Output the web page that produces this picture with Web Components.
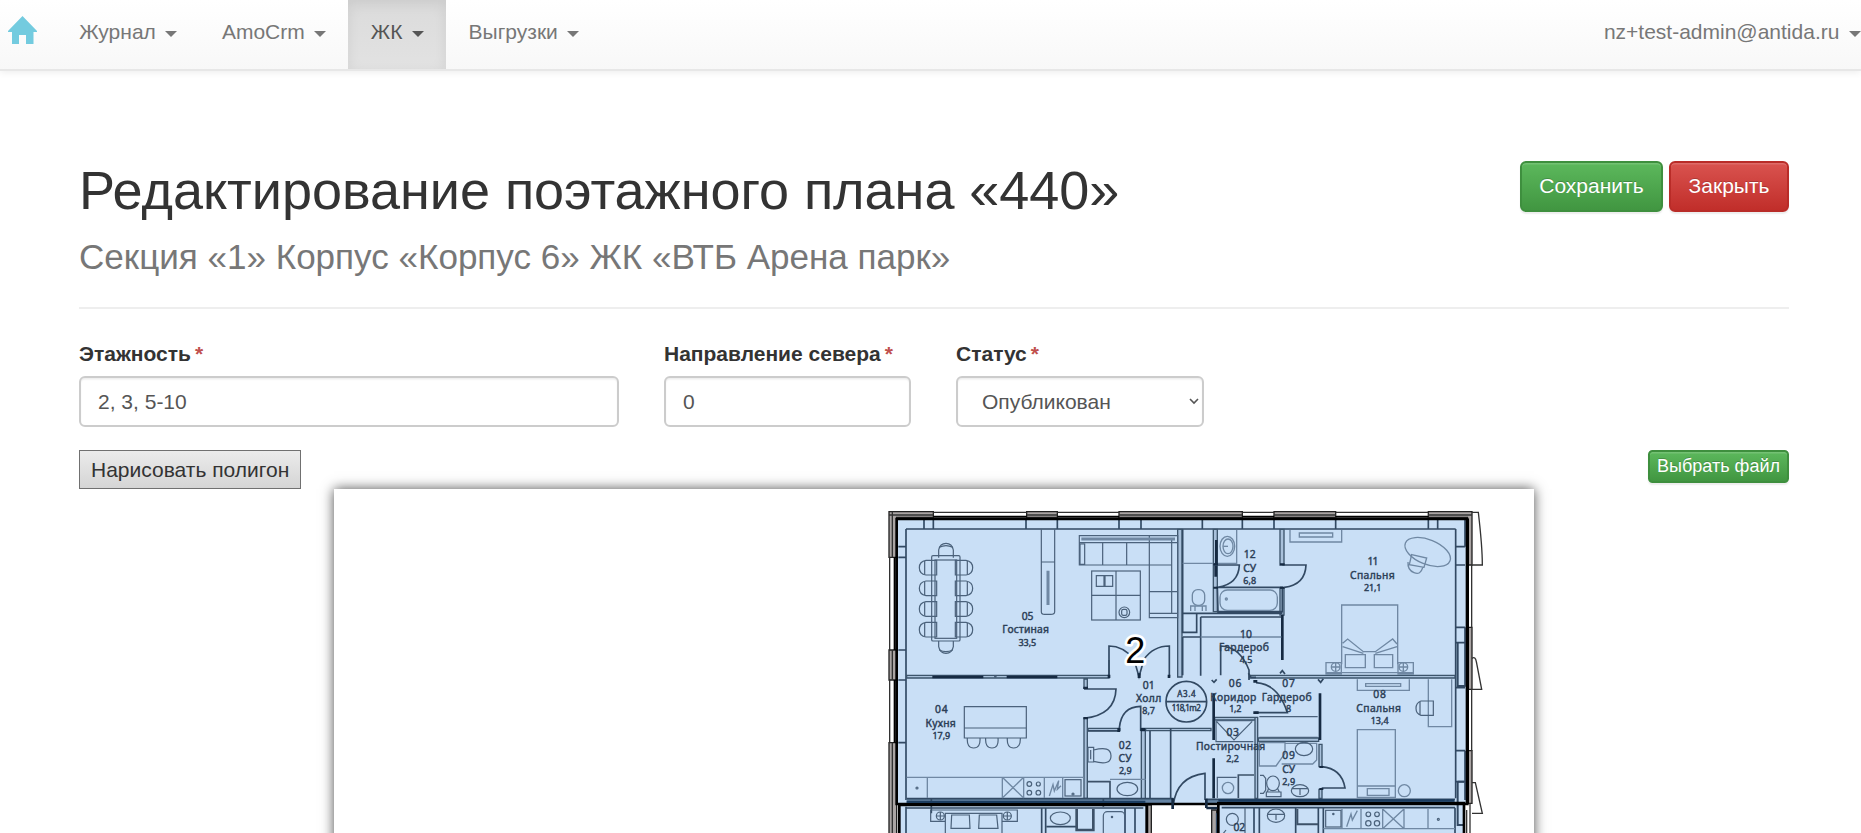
<!DOCTYPE html>
<html lang="ru">
<head>
<meta charset="utf-8">
<title>Редактирование поэтажного плана</title>
<style>
html, body { margin: 0; height: 833px; overflow: hidden; background: #fff; }
body { font: 21px/30px "Liberation Sans", Arial, sans-serif; color: #333; }
</style>
</head>
<body>
<plan-editor-app></plan-editor-app>
<script>
function define(name, html, setup) {
  const t = document.createElement('template');
  t.innerHTML = html;
  customElements.define(name, class extends HTMLElement {
    connectedCallback() {
      if (this.shadowRoot) return;
      this.attachShadow({ mode: 'open' }).appendChild(t.content.cloneNode(true));
      if (setup) setup(this, this.shadowRoot);
    }
  });
}

define('nav-item', `
<style>
:host { display: flex; align-items: flex-start; box-sizing: border-box; height: 69px; padding: 17px 22.5px 0; color: #777; text-shadow: 0 1px 0 rgba(255,255,255,.25); line-height: 30px; white-space: nowrap; }
:host([active]) { color: #555; background: linear-gradient(#dbdbdb, #e2e2e2); box-shadow: inset 0 4px 13px rgba(0,0,0,.075); }
:host([end]) { padding-right: 0.5px; }
i { margin: 14px 0 0 9.1px; border: 6px solid transparent; border-top-color: currentColor; border-bottom: 0; }
</style>
<slot></slot><i></i>`);

define('app-navbar', `
<style>
:host { display: flex; height: 69px; background: linear-gradient(#fff, #f8f8f8); border-bottom: 2px solid #e7e7e7; box-shadow: 0 1.5px 7px rgba(0,0,0,.075); }
.home { width: 48.7px; padding-left: 8px; box-sizing: content-box; }
.home svg { display: block; margin-top: 16px; }
nav { display: flex; flex: 1; }
nav > :last-child { margin-left: auto; }
</style>
<a class="home"><svg width="29" height="28" viewBox="0 0 29 28"><path fill="#73cbdf" d="M14.5 0 29 15v1h-3.500v12H18v-9h-7v9H4V16H0v-1z"/></svg></a>
<nav>
<nav-item>Журнал</nav-item><nav-item>AmoCrm</nav-item><nav-item active>ЖК</nav-item><nav-item>Выгрузки</nav-item>
<nav-item end>nz+test-admin@antida.ru</nav-item>
</nav>`);

define('ui-button', `
<style>
:host { display: block; }
button { display: block; box-sizing: border-box; height: 51px; margin: 0; padding: 0 17.5px 2px; border: 2px solid #3e8f3e; border-radius: 6px; font: 21px/45px "Liberation Sans", Arial, sans-serif; color: #fff; text-shadow: 0 -1px 0 rgba(0,0,0,.2); background: linear-gradient(#5cb85c, #419641); box-shadow: inset 0 1.5px 0 rgba(255,255,255,.15), 0 1.5px 1.500px rgba(0,0,0,.075); white-space: nowrap; }
:host([kind=danger]) button { border-color: #b92c28; background: linear-gradient(#d9534f, #c12e2a); }
:host([kind=small]) button { height: 33px; padding: 0 7px; font-size: 18px; line-height: 27px; border-radius: 4.5px; }
:host([kind=plain]) button { height: 39px; padding: 0 11px; border: 1px solid #707070; border-radius: 0; color: #333; line-height: 36px; background: linear-gradient(#ebebeb, #d5d5d5); box-shadow: none; text-shadow: none; }
</style>
<button><slot></slot></button>`);

define('page-heading', `
<style>
:host { display: flex; justify-content: space-between; align-items: flex-start; height: 146px; border-bottom: 2px solid #eee; }
h1 { margin: 0; font-weight: 400; font-size: 54px; line-height: 59.4px; letter-spacing: -.03px; }
h2 { margin: 16.6px 0 0; font-weight: 400; font-size: 35.05px; line-height: 39.6px; color: #777; }
.actions { display: flex; gap: 6px; }
</style>
<div><h1><slot name="title"></slot></h1><h2><slot name="subtitle"></slot></h2></div>
<div class="actions"><slot></slot></div>`);

define('form-field', `
<style>
:host { display: block; min-width: 0; }
label { display: block; height: 30px; margin-bottom: 7.5px; font-weight: 700; line-height: 30px; white-space: nowrap; }
b { margin-left: 4px; color: #c0504d; }
.box { display: flex; align-items: center; justify-content: space-between; box-sizing: border-box; height: 51px; padding: 0 17px; border: 2px solid #ccc; border-radius: 6px; color: #555; box-shadow: inset 0 1.5px 1.5px rgba(0,0,0,.075); }
svg { display: none; }
:host([select]) .box { padding: 0 3px 0 24px; }
:host([select]) svg { display: block; }
</style>
<label><span></span><b>*</b></label>
<div class="box"><slot></slot><svg width="10" height="7" viewBox="0 0 10 7"><path d="M1 1l4 4 4-4" fill="none" stroke="#555" stroke-width="1.6"/></svg></div>`,
(host, root) => { root.querySelector('span').textContent = host.getAttribute('label'); });

// Drawing units: one third of a pixel, origin at the drawing's upper left.
define('floor-plan', `
<style>
:host { display: block; width: 1200px; height: 360px; margin: 0 auto; background: #fff; box-shadow: 0 0 12px rgba(0,0,0,.7); }
svg { display: block; }
.w { fill: none; stroke: #334a63; stroke-width: 5; }
.t { fill: none; stroke: #3c5168; stroke-width: 8; }
.f { fill: none; stroke: #6f88a3; stroke-width: 4; }
.m { fill: none; stroke: #4b627b; stroke-width: 3.6; }
.d { fill: none; stroke: #152b43; stroke-width: 8; }
.g { fill: #aaa5a4; stroke: #222; stroke-width: 4; }
.o { fill: none; stroke: #333; stroke-width: 4; }
.v { fill: #a9c1db; stroke: #3d546c; stroke-width: 4; }
.k { fill: none; stroke: #000; stroke-width: 8; }
text { font-family: "Noto Sans", sans-serif; fill: #2c4057; stroke: #2c4057; stroke-width: 1.3; font-size: 31px; text-anchor: middle; }
text.s { font-size: 27px; }
text.n { font: 108px "Liberation Sans", Arial, sans-serif; fill: #000; stroke: #fff; stroke-width: 16; paint-order: stroke; stroke-linejoin: round; }
</style>
<svg width="1200" height="344" viewBox="-1638 -33 3600 1032">
<defs><filter id="soft" x="-5%" y="-5%" width="110%" height="110%"><feGaussianBlur stdDeviation="1.5"/></filter></defs>
<g filter="url(#soft)">
  <path fill="#c9dff6" d="M50 57H1762V912H1752V1010H1015V912H800V1010H58V912H50z"/>
  <!-- outer walls -->
  <path class="g" d="M27 35H160V52H50V172H27zM440 35H532V52H440zM717 35H1087V52H717zM1182 35H1367V52H1182zM1645 35H1776V195H1762V52H1645zM27 450H50V540H27zM27 728H50V1010H27zM1764 382H1776V568H1764zM1764 752H1776V910H1764zM803 915H814V1010H803zM995 930H1010V1010H995z"/>
  <path class="o" d="M27 45H160M717 45H1087M1182 45H1367M1645 45H1776M37 35V172M37 450V540M37 728V1010M440 45H532M160 37H440M532 37H717M1087 37H1182M1367 37H1645M29 172V450M29 540V728M1775 195V382M1775 568V752M1760 930V1010M1770 910V1010"/>
  <path class="k" d="M160 50H440M532 50H717M1087 50H1182M1367 50H1645M44 172V450M44 540V728" style="stroke-width:6"/>
  <path class="o" d="M1776 37H1795C1800 80 1807 140 1807 195H1776M1776 475Q1786 468 1789 485L1805 568H1776M1776 848H1786L1807 940H1776"/>
  <!-- perimeter wall inner face -->
  <path class="w" d="M78 87H1727M78 87V900M1727 87V895M132 60V87M160 60V87M438 60V87M532 60V87M717 60V87M783 60V87M967 60V87M1087 60V87M1182 60V87M1367 60V87M1645 60V87M1673 60V87M55 140H78M55 172H78M55 450H78M55 540H78M55 728H78M1727 140H1755M1727 195H1755M1727 382H1755M1727 428H1755M1727 563H1755M1727 752H1755M1727 845H1755M1755 60V140M1755 382V560M1755 752V900"/>
  <path class="w" d="M1733 428V558H1755M1733 845V975H1752M1733 845H1752" style="stroke-width:6"/>
  <path class="v" d="M80 526H687V534H80zM893 88H906V531H893zM1000 88H1012V335H1000zM1200 88H1212V195H1200zM1200 265H1212V345H1200zM687 480V534M1108 526H1725V534H1108zM612 537H622V565H612zM612 655H622V895H612zM624 685H720V692H624zM784 685H796V897H784zM797 685H993V692H797zM1004 652H1125V660H1004zM1125 652H1133V895H1125zM1135 714H1316V724H1135zM1317 733H1326V800H1317zM1317 868H1326V895H1317z"/>
  <path fill="#6584a4" d="M80 897H876V909H80zM980 897H1725V909H980z"/>
  <path class="w" d="M80 896H880M978 898H1725M154 896V940M670 898V920M1010 940V1010"/>
  <!-- living room -->
  <g class="m">
    <rect x="155" y="167" width="85" height="256" rx="4"/><rect x="165" y="180" width="65" height="235"/>
    <path d="M176 173V150Q180 130 198 130T220 150V173M176 423V440Q180 460 198 460T220 440V423"/>
    <path id="ch" d="M170 181H138Q118 184 118 203T138 225H170zM226 181H258Q278 184 278 203T258 225H226z"/>
    <use href="#ch" y="62"/><use href="#ch" y="124"/><use href="#ch" y="186"/>
    <path d="M178 142Q198 132 218 142M178 450Q198 460 218 450M134 183V223M262 183V223M134 245V285M262 245V285M134 307V347M262 307V347M134 369V409M262 369V409"/>
    <path d="M484 88V335Q484 343 494 343H512Q524 343 524 335V88M484 186H524M598 107H893V353H808V195H598zM598 128H893M668 128V195M740 128V195M808 107V195H875M875 120V340M808 275H893M808 340H893M600 132H614V193H600z"/>
    <rect x="635" y="213" width="146" height="147"/><path d="M708 213V360M635 286H781M649 227H672V259H649zM675 227H698V259H675z"/><circle cx="733" cy="337" r="16"/><rect x="725" y="328" width="16" height="18" rx="5"/>
  </g>
  <path class="f" style="stroke-width:9" d="M504 212V315M604 117H885"/>
  <path class="w" d="M687 530V438Q730 438 762 478L777 530L792 478Q820 438 868 438V530"/>
  <path class="d" d="M157 531H310M380 531H532M1009 120V195M1007 190V230M1207 385V480M1207 345V420M1001 580V720M1001 775V895M1320 580V720"/>
  <circle cx="346" cy="530" r="4" fill="#465d75"/>
  <!-- upper bathroom, wardrobe -->
  <path class="w" d="M908 88V340M908 340H950V397H908zM950 340H1207M962 351H1204M962 351V527M908 411V526M1012 262H1207V335H1014zM1001 195H1078Q1076 252 1013 262M1207 195H1278Q1276 254 1213 262M1022 526V438Q1080 440 1107 510V540M908 411H962"/>
  <g class="f">
    <path d="M908 190H1000M962 411H1204M1014 190H1070V90"/><rect x="1020" y="270" width="172" height="61" rx="22"/><circle cx="1039" cy="297" r="3"/>
    <ellipse cx="1042" cy="139" rx="22" ry="30"/><ellipse cx="1044" cy="139" rx="15" ry="22"/><path d="M1030 139H1044"/>
    <rect x="937" y="269" width="37" height="47" rx="16"/><path d="M932 333V318H978V333M945 316V333M967 316V333"/>
    <path d="M1230 90V126H1385V90M1258 99H1358V111H1258z"/>
    <ellipse cx="1643" cy="156" rx="72" ry="37" transform="rotate(22 1643 156)"/><path d="M1595 164L1640 174 1632 202 1588 194zM1584 186Q1582 210 1602 218T1628 203"/>
    <path d="M1385 493V315H1553V493M1388 430L1403 417 1450 455H1486L1538 417 1551 432M1388 440L1450 460M1551 440L1486 460M1396 464H1456V503H1396zM1483 464H1538V503H1483zM1338 488H1384V522H1338zM1554 488H1600V522H1554zM1340 518H1600"/>
    <circle cx="1367" cy="501" r="13"/><circle cx="1570" cy="501" r="13"/><path d="M1354 501H1380M1367 488V514M1557 501H1583M1570 488V514"/>
  </g>
  <!-- kitchen -->
  <g class="m" transform="translate(0 480)">
    <path d="M253 140H439V234H253zM253 204H439M262 234Q260 264 281 264T300 234M317 234Q315 264 336 264T354 234M382 234Q380 264 401 264T421 234"/>
    <path class="f" d="M80 352H612M142 352V414M367 352V414M431 352V414M493 352V414M548 352V414M367 352L431 414M431 352L367 414M508 408L519 374 523 393 536 362 532 388 543 377"/>
    <rect x="555" y="359" width="48" height="49"/><circle cx="448" cy="372" r="7"/><circle cx="475" cy="372" r="6"/><circle cx="448" cy="398" r="7"/><circle cx="475" cy="398" r="7"/><circle cx="111" cy="384" r="3"/><circle cx="579" cy="402" r="3"/>
    <path d="M624 262H641V306H624zM641 270Q692 256 693 287T641 304zM632 270V298"/>
    <path class="f" d="M690 358H797"/><ellipse cx="742" cy="387" rx="31" ry="20"/>
    <path class="t" style="stroke-width:5" d="M624 365H690V414"/>
    <path class="w" d="M612 87H708Q706 165 612 175M624 213H718V204Q724 140 782 139V213M810 213V414M872 205V415M975 420V340Q890 350 880 435"/>
  </g>
  <!-- hall and service rooms -->
  <circle class="w" cx="919" cy="605" r="61"/><path class="w" d="M858 605H980"/>
  <g transform="translate(870 480)">
    <path class="w" d="M125 60L132 67 140 58M330 40L337 32 345 42M444 58L452 67 460 56M258 68Q325 72 352 158H255M235 40L243 52H258M455 320Q515 325 525 384H455"/>
    <path class="m" d="M140 182H250M138 182V245H250M140 185L192 240 246 185M268 170H443M268 232H443M140 352H200M142 352V414"/><path class="t" style="stroke-width:5" d="M252 345H205V414"/>
    <circle class="f" cx="174" cy="384" r="17"/>
    <path class="f" d="M268 248H345V280L318 318H268zM345 250H440V300L428 312H335"/><ellipse class="m" cx="402" cy="267" rx="26" ry="20"/>
    <path class="m" d="M270 346H280L287 355V390L280 400H270"/><ellipse class="m" cx="309" cy="370" rx="19" ry="22"/><path class="m" d="M289 396H333V410H289zM296 384L292 396M322 384L328 396"/><ellipse class="m" cx="390" cy="392" rx="26" ry="18"/><path class="m" d="M366 386H414M390 386V405"/>
    <path class="f" d="M562 58V91H718V58M587 71H692V79H587zM775 58V200H845V58"/>
    <path class="m" d="M790 123H753Q738 128 738 145T753 166H790zM750 125V165"/>
    <path class="f" d="M562 412V209H676V412zM562 378H676M592 386H657V406H592z"/><circle class="f" cx="703" cy="392" r="18"/>
  </g>
  <!-- lower apartments -->
  <g transform="translate(0 480)" class="m">
    <path d="M152 450V484H196M196 530V460H366V530M366 484H412V450H152M215 465H268L270 505H213zM298 465H350L354 505H296z"/><circle cx="181" cy="468" r="12"/><circle cx="382" cy="468" r="12"/><path d="M169 468H193M181 456V480M370 468H394M382 456V480"/>
    <path class="w" d="M78 440V530M80 444H790M485 445V530M497 445V530M735 445V530M765 445V530M500 500H590"/><ellipse cx="541" cy="475" rx="30" ry="19"/><path class="t" d="M590 447V510H640V447"/><rect x="670" y="455" width="64" height="80" rx="12"/><circle cx="696" cy="471" r="2"/>
  </g>
  <g transform="translate(870 480)" class="m">
    <circle cx="187" cy="478" r="18"/><path d="M168 510L160 520M225 445V530"/><path class="w" d="M155 443H855M855 443V530M252 445V530M268 445V530M377 445V530M445 445V530M460 445V530"/>
    <ellipse cx="318" cy="467" rx="26" ry="20"/><path d="M292 463H344M318 463V480"/><path class="t" style="stroke-width:6" d="M382 447V493H445"/>
    <path class="f" d="M460 506H855M516 447V506M573 447V506M638 447V506M702 447V506M774 447V506M638 447L702 506M702 447L638 506M530 500L543 462 547 480 562 452"/><rect x="467" y="451" width="46" height="50"/><circle cx="595" cy="463" r="7"/><circle cx="621" cy="463" r="7"/><circle cx="595" cy="490" r="8"/><circle cx="621" cy="490" r="8"/><circle cx="805" cy="478" r="3"/><circle cx="490" cy="462" r="2"/>
  </g>
  <!-- door jambs -->
  <path fill="#152b43" d="M683 524h8v10h-8zM863 524h8v10h-8zM773 520h9v14h-9zM610 560h14v7h-14zM610 651h14v7h-14zM712 684h8v12h-8zM782 684h14v10h-14zM1000 190h14v6h-14zM1000 260h14v6h-14zM1200 190h14v6h-14zM1200 260h14v6h-14zM1120 540h12v8h-12zM1120 634h16v8h-16zM1318 798h12v6h-12zM1318 864h12v6h-12z"/>
  <path class="k" d="M50 912V57H1762V912z"/><path class="k" d="M58 1010V915H800V1010M1015 1010V909H1752V1010"/><path class="k" d="M1762 57V912" style="stroke-width:10"/>
  <path fill="#1d3d60" d="M80 902H796V909H80zM1015 898H1722V905H1015z"/>
  <path class="d" d="M878 895V927M979 896V924M979 924H1012"/>
</g>
<text x="443" y="360" textLength="35">05</text><text x="437" y="399" textLength="140">Гостиная</text><text class="s" x="442" y="437" textLength="53">33,5</text>
<text x="1109" y="174" textLength="36">12</text><text x="1109" y="216" textLength="39">СУ</text><text class="s" x="1109" y="251" textLength="39">6,8</text>
<text x="1479" y="196" textLength="33">11</text><text x="1477" y="238" textLength="134">Спальня</text><text class="s" x="1478" y="273" textLength="52">21,1</text>
<text x="1098" y="413" textLength="36">10</text><text x="1092" y="454" textLength="150">Гардероб</text><text class="s" x="1098" y="490" textLength="38">4,5</text>
<text x="184" y="640" textLength="38">04</text><text x="182" y="681" textLength="91">Кухня</text><text class="s" x="184" y="717" textLength="53">17,9</text>
<text x="806" y="566" textLength="36">01</text><text x="806" y="607" textLength="76">Холл</text><text class="s" x="806" y="643" textLength="38">8,7</text>
<text x="735" y="746" textLength="37">02</text><text x="735" y="787" textLength="39">СУ</text><text class="s" x="736" y="823" textLength="38">2,9</text>
<text x="919" y="591" style="font-size:24px" textLength="55">А3.4</text><text x="919" y="632" style="font-size:24px" textLength="87">118,1m2</text>
<text x="1065" y="560" textLength="38">06</text><text x="1060" y="602" textLength="138">Коридор</text><text class="s" x="1066" y="637" textLength="36">1,2</text>
<text x="1226" y="560" textLength="38">07</text><text x="1220" y="602" textLength="150">Гардероб</text><text class="s" x="1226" y="637">8</text>
<text x="1058" y="709" textLength="37">03</text><text x="1052" y="751" textLength="208">Постирочная</text><text class="s" x="1058" y="787" textLength="38">2,2</text>
<text x="1226" y="777" textLength="38">09</text><text x="1226" y="819" textLength="39">СУ</text><text class="s" x="1226" y="854" textLength="39">2,9</text>
<text x="1499" y="593" textLength="38">08</text><text x="1496" y="636" textLength="134">Спальня</text><text class="s" x="1499" y="671" textLength="54">13,4</text>
<text x="1078" y="994" textLength="35">02</text>
<text class="n" x="766" y="489">2</text>
</svg>`);

define('plan-editor-app', `
<style>
:host { display: block; }
main { box-sizing: border-box; padding: 90px 72px 0 79px; }
.fields { display: grid; grid-template-columns: 540px 247px 248px; column-gap: 45px; padding-top: 29.500px; }
.tools { display: flex; justify-content: space-between; align-items: flex-start; height: 39px; margin-top: 23px; }
floor-plan { margin-left: 255px; }
</style>
<app-navbar></app-navbar>
<main>
  <page-heading>
    <span slot="title">Редактирование поэтажного плана «440»</span>
    <span slot="subtitle">Секция «1» Корпус «Корпус 6» ЖК «ВТБ Арена парк»</span>
    <ui-button>Сохранить</ui-button><ui-button kind="danger">Закрыть</ui-button>
  </page-heading>
  <div class="fields">
    <form-field label="Этажность">2, 3, 5-10</form-field>
    <form-field label="Направление севера">0</form-field>
    <form-field label="Статус" select>Опубликован</form-field>
  </div>
  <div class="tools"><ui-button kind="plain">Нарисовать полигон</ui-button><ui-button kind="small">Выбрать файл</ui-button></div>
  <floor-plan></floor-plan>
</main>`);
</script>
</body>
</html>
